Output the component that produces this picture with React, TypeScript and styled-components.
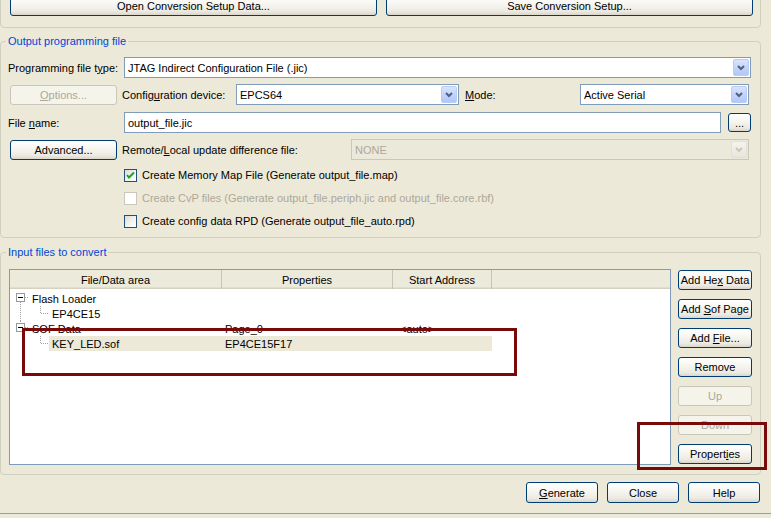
import React from 'react';
import styled, { createGlobalStyle } from 'styled-components';

const GlobalStyle = createGlobalStyle`
  html, body { margin: 0; padding: 0; background: #ECE9D8; }
  body { font-family: "Liberation Sans", Arial, sans-serif; font-size: 11px; color: #000; }
  * { box-sizing: border-box; }
`;

const Page = styled.div`
  position: relative;
  width: 771px;
  height: 518px;
  overflow: hidden;
  display: flex;
  flex-direction: column;
`;

const TopBox = styled.div`
  margin: -10px 0 0 0;
  width: 761px;
  height: 38px;
  flex: none;
  border: 1px solid #D0D0BF;
  border-radius: 4px;
  padding: 4px 0 0 9px;
  display: flex;
  gap: 9px;
`;

const Btn = styled.button<{ $w: number; $h?: number; $ml?: number }>`
  flex: none;
  width: ${p => p.$w}px;
  height: ${p => p.$h ?? 21}px;
  margin-left: ${p => p.$ml ?? 0}px;
  padding: 0;
  font: inherit;
  color: #000;
  text-align: center;
  white-space: nowrap;
  border: 1px solid #003C74;
  border-radius: 3px;
  background: linear-gradient(180deg, #FFFFFF 0%, #F7F6F1 40%, #ECEAE2 80%, #DAD6CA 100%);
  &:disabled {
    border-color: #C9C7BA;
    color: #ACA899;
    background: #F5F4EA;
  }
`;

const Group = styled.fieldset<{ $mt: number; $pt: number; $pb: number }>`
  margin: ${p => p.$mt}px 0 0 0;
  width: 761px;
  min-width: 0;
  flex: none;
  padding: ${p => p.$pt}px 0 ${p => p.$pb}px 0;
  border: 1px solid #D0D0BF;
  border-radius: 4px;
`;

const Legend = styled.legend`
  margin-left: 5px;
  padding: 0 2px;
  color: #0046D5;
  font-size: 11px;
  line-height: 13px;
`;

const GroupBody = styled.div<{ $pl: number }>`
  padding-left: ${p => p.$pl}px;
`;

const FormRow = styled.div<{ $mt?: number }>`
  display: flex;
  align-items: center;
  height: 21px;
  margin-top: ${p => p.$mt ?? 0}px;
`;

const Label = styled.span<{ $w: number; $ml?: number }>`
  flex: none;
  width: ${p => p.$w}px;
  margin-left: ${p => p.$ml ?? 0}px;
  white-space: nowrap;
`;

const SelectBox = styled.div<{ $w: number; $disabled?: boolean }>`
  flex: none;
  width: ${p => p.$w}px;
  height: 21px;
  border: 1px solid ${p => (p.$disabled ? '#C9C7BA' : '#7F9DB9')};
  background: ${p => (p.$disabled ? '#EBE9DA' : '#FFFFFF')};
  display: flex;
  align-items: center;
  padding: 1px;
`;

const SelectText = styled.span<{ $disabled?: boolean }>`
  flex: 1;
  padding-left: 2px;
  white-space: nowrap;
  overflow: hidden;
  color: ${p => (p.$disabled ? '#ACA899' : '#000')};
`;

const ArrowBtn = styled.span<{ $disabled?: boolean }>`
  flex: none;
  width: 16px;
  height: 17px;
  border-radius: 2px;
  border: 1px solid ${p => (p.$disabled ? '#E2E0D6' : '#B9CCF4')};
  background: ${p =>
    p.$disabled
      ? 'linear-gradient(180deg, #F4F3EE, #E8E6DC)'
      : 'linear-gradient(180deg, #D9E4FC 0%, #C3D4FB 50%, #B2C7F6 100%)'};
  display: flex;
  align-items: center;
  justify-content: center;
`;

const Chevron = ({ color }: { color: string }) => (
  <svg width="8" height="6" viewBox="0 0 8 6">
    <polyline points="1,1 4,4 7,1" fill="none" stroke={color} strokeWidth="2" />
  </svg>
);

const Select = ({ w, value, disabled }: { w: number; value: string; disabled?: boolean }) => (
  <SelectBox $w={w} $disabled={disabled}>
    <SelectText $disabled={disabled}>{value}</SelectText>
    <ArrowBtn $disabled={disabled}>
      <Chevron color={disabled ? '#C9C7BA' : '#4D6185'} />
    </ArrowBtn>
  </SelectBox>
);

const TextInput = styled.div<{ $w: number }>`
  flex: none;
  width: ${p => p.$w}px;
  height: 21px;
  border: 1px solid #7F9DB9;
  background: #fff;
  padding-left: 3px;
  display: flex;
  align-items: center;
`;

const CheckRow = styled.div<{ $dim?: boolean }>`
  display: flex;
  align-items: center;
  gap: 5px;
  height: 16px;
  margin: 7px 0 0 116px;
  color: ${p => (p.$dim ? '#ACA899' : '#000')};
  white-space: nowrap;
`;

const Box = styled.span<{ $dim?: boolean }>`
  flex: none;
  width: 13px;
  height: 13px;
  border: 1px solid ${p => (p.$dim ? '#CAC8BB' : '#1C5180')};
  background: ${p => (p.$dim ? '#FFFFFF' : 'linear-gradient(135deg, #DCDCD7 0%, #F4F4F0 60%, #FFFFFF 100%)')};
  display: flex;
  align-items: center;
  justify-content: center;
`;

const Check = ({ checked, dim }: { checked?: boolean; dim?: boolean }) => (
  <Box $dim={dim}>
    {checked && (
      <svg width="9" height="9" viewBox="0 0 9 9">
        <polyline points="1,4 3,6.5 8,1.5" fill="none" stroke="#21A121" strokeWidth="2" />
      </svg>
    )}
  </Box>
);

const InputArea = styled.div`
  display: flex;
  gap: 7px;
  padding-left: 8px;
`;

const TableBox = styled.div`
  flex: none;
  width: 662px;
  height: 196px;
  border: 1px solid #7F9DB9;
  background: #fff;
`;

const Header = styled.div`
  display: flex;
  height: 19px;
  background: #EBEADB;
  box-shadow: inset 0 -1px 0 #D6D2C2, inset 0 -2px 0 #E2DECD;
`;

const HeaderCell = styled.div<{ $w: number }>`
  flex: none;
  width: ${p => p.$w}px;
  display: flex;
  align-items: center;
  justify-content: center;
  border-right: 1px solid #C7C5B2;
  white-space: nowrap;
`;

const Body = styled.div`
  padding-top: 2px;
`;

const TreeRow = styled.div`
  display: flex;
  height: 15px;
`;

const RowBody = styled.div<{ $sel?: boolean }>`
  display: flex;
  background: ${p => (p.$sel ? '#ECE9D8' : 'transparent')};
`;

const Cell = styled.div<{ $w: number; $pl?: number }>`
  flex: none;
  width: ${p => p.$w}px;
  padding-left: ${p => p.$pl ?? 3}px;
  display: flex;
  align-items: center;
  white-space: nowrap;
`;

const dot = { stroke: '#A0A0A0', strokeDasharray: '1 1', fill: 'none' } as const;

const RootGutter = ({ prev, next }: { prev?: boolean; next?: boolean }) => (
  <svg width="19" height="15" viewBox="0 0 19 15" style={{ flex: 'none' }}>
    {prev && <line x1="10.5" y1="0" x2="10.5" y2="2" {...dot} />}
    {next && <line x1="10.5" y1="11" x2="10.5" y2="15" {...dot} />}
    <line x1="15" y1="6.5" x2="19" y2="6.5" {...dot} />
    <rect x="6.5" y="2.5" width="8" height="8" fill="#fff" stroke="#919B9C" />
    <line x1="8" y1="6.5" x2="13" y2="6.5" stroke="#000" />
  </svg>
);

const ChildGutter = ({ trunk }: { trunk?: boolean }) => (
  <svg width="39" height="15" viewBox="0 0 39 15" style={{ flex: 'none' }}>
    {trunk && <line x1="10.5" y1="0" x2="10.5" y2="15" {...dot} />}
    <line x1="30.5" y1="0" x2="30.5" y2="7" {...dot} />
    <line x1="31" y1="7.5" x2="39" y2="7.5" {...dot} />
  </svg>
);

const SideButtons = styled.div`
  display: flex;
  flex-direction: column;
  gap: 9px;
  padding-top: 1px;
`;

const BottomBar = styled.div`
  display: flex;
  justify-content: flex-end;
  gap: 9px;
  padding-right: 11px;
  margin-top: 7px;
  flex: none;
`;

const Footer = styled.div`
  margin-top: 10px;
  border-top: 1px solid #9D9D9D;
  flex: 1;
`;

const Mark = styled.div<{ $x: number; $y: number; $w: number; $h: number }>`
  position: absolute;
  left: ${p => p.$x}px;
  top: ${p => p.$y}px;
  width: ${p => p.$w}px;
  height: ${p => p.$h}px;
  border: 3px solid #780A0A;
  pointer-events: none;
`;

export default function App() {
  return (
    <Page>
      <GlobalStyle />
      <TopBox>
        <Btn $w={367}>Open Conversion Setup Data...</Btn>
        <Btn $w={367}>Save Conversion Setup...</Btn>
      </TopBox>

      <Group $mt={7} $pt={9} $pb={8}>
        <Legend>Output programming file</Legend>
        <GroupBody $pl={7}>
          <FormRow>
            <Label $w={116}>Programming file t<u>y</u>pe:</Label>
            <Select w={627} value="JTAG Indirect Configuration File (.jic)" />
          </FormRow>
          <FormRow $mt={6}>
            <Btn $w={107} $h={20} $ml={2} disabled>
              <u>O</u>ptions...
            </Btn>
            <Label $w={114} $ml={5}>Config<u>u</u>ration device:</Label>
            <Select w={223} value="EPCS64" />
            <Label $w={115} $ml={6}><u>M</u>ode:</Label>
            <Select w={169} value="Active Serial" />
          </FormRow>
          <FormRow $mt={7}>
            <Label $w={116}>File <u>n</u>ame:</Label>
            <TextInput $w={597}>output_file.jic</TextInput>
            <Btn $w={23} $h={19} $ml={7}>...</Btn>
          </FormRow>
          <FormRow $mt={6}>
            <Btn $w={107} $h={20} $ml={2}>Advanced...</Btn>
            <Label $w={229} $ml={5}>Remote/<u>L</u>ocal update difference file:</Label>
            <Select w={398} value="NONE" disabled />
          </FormRow>
          <CheckRow>
            <Check checked />
            Create Memory Map File (Generate output_file.map)
          </CheckRow>
          <CheckRow $dim>
            <Check dim />
            Create CvP files (Generate output_file.periph.jic and output_file.core.rbf)
          </CheckRow>
          <CheckRow>
            <Check />
            Create config data RPD (Generate output_file_auto.rpd)
          </CheckRow>
        </GroupBody>
      </Group>

      <Group $mt={8} $pt={10} $pb={9}>
        <Legend>Input files to convert</Legend>
        <InputArea>
          <TableBox>
            <Header>
              <HeaderCell $w={212}>File/Data area</HeaderCell>
              <HeaderCell $w={171}>Properties</HeaderCell>
              <HeaderCell $w={99}>Start Address</HeaderCell>
            </Header>
            <Body>
              <TreeRow>
                <RootGutter next />
                <RowBody>
                  <Cell $w={193}>Flash Loader</Cell>
                  <Cell $w={171} />
                  <Cell $w={99} />
                </RowBody>
              </TreeRow>
              <TreeRow>
                <ChildGutter trunk />
                <RowBody>
                  <Cell $w={173}>EP4CE15</Cell>
                  <Cell $w={171} />
                  <Cell $w={99} />
                </RowBody>
              </TreeRow>
              <TreeRow>
                <RootGutter prev />
                <RowBody>
                  <Cell $w={193}>SOF Data</Cell>
                  <Cell $w={171}>Page_0</Cell>
                  <Cell $w={99} $pl={7}>&lt;auto&gt;</Cell>
                </RowBody>
              </TreeRow>
              <TreeRow>
                <ChildGutter />
                <RowBody $sel>
                  <Cell $w={173}>KEY_LED.sof</Cell>
                  <Cell $w={171}>EP4CE15F17</Cell>
                  <Cell $w={99} />
                </RowBody>
              </TreeRow>
            </Body>
          </TableBox>
          <SideButtons>
            <Btn $w={74} $h={20}>Add He<u>x</u> Data</Btn>
            <Btn $w={74} $h={20}>Add <u>S</u>of Page</Btn>
            <Btn $w={74} $h={20}>Add <u>F</u>ile...</Btn>
            <Btn $w={74} $h={20}>Remove</Btn>
            <Btn $w={74} $h={20} disabled>Up</Btn>
            <Btn $w={74} $h={20} disabled>Down</Btn>
            <Btn $w={74} $h={20}>Propert<u>i</u>es</Btn>
          </SideButtons>
        </InputArea>
      </Group>

      <BottomBar>
        <Btn $w={72}><u>G</u>enerate</Btn>
        <Btn $w={72}>Close</Btn>
        <Btn $w={72}>Help</Btn>
      </BottomBar>
      <Footer />

      <Mark $x={22} $y={328} $w={495} $h={48} />
      <Mark $x={637} $y={422} $w={130} $h={48} />
    </Page>
  );
}
